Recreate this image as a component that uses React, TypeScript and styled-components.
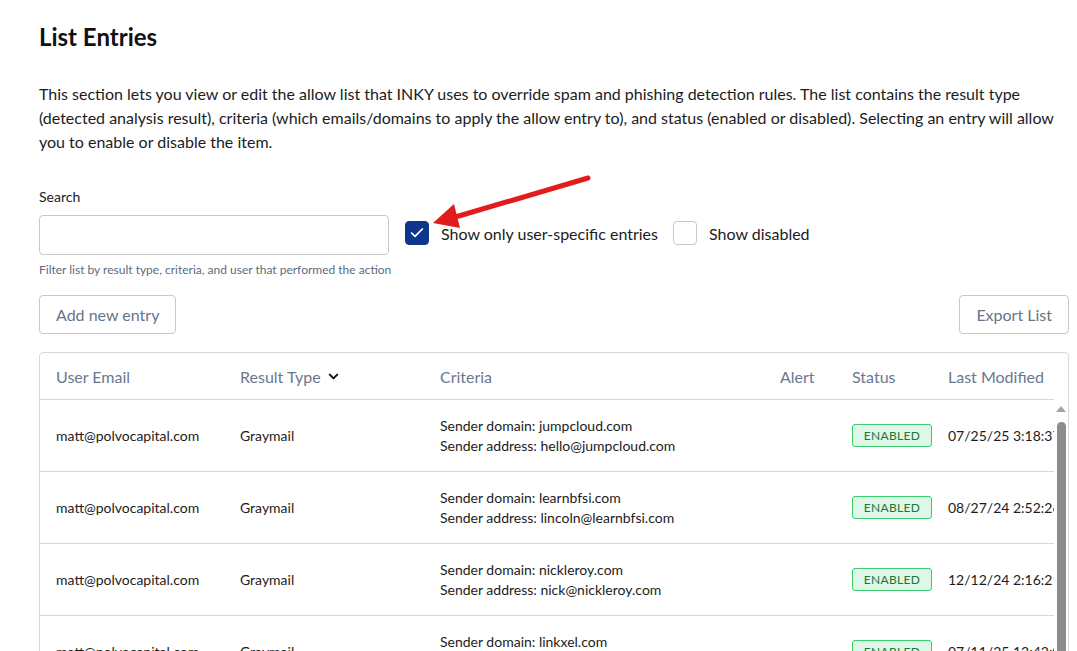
import styled, { createGlobalStyle } from "styled-components";
import { Check, ChevronDown } from "lucide-react";

const GlobalStyle = createGlobalStyle`
  html, body {
    margin: 0;
    padding: 0;
    overflow: hidden;
    background: #fff;
  }
  body {
    font-family: Lato, "Open Sans", sans-serif;
    color: #1c1c1c;
  }
  * { box-sizing: border-box; }
`;

interface Entry {
  email: string;
  resultType: string;
  domain: string;
  address: string;
  modified: string;
}

const entries: Entry[] = [
  { email: "matt@polvocapital.com", resultType: "Graymail", domain: "jumpcloud.com", address: "hello@jumpcloud.com", modified: "07/25/25 3:18:37 PM" },
  { email: "matt@polvocapital.com", resultType: "Graymail", domain: "learnbfsi.com", address: "lincoln@learnbfsi.com", modified: "08/27/24 2:52:26 PM" },
  { email: "matt@polvocapital.com", resultType: "Graymail", domain: "nickleroy.com", address: "nick@nickleroy.com", modified: "12/12/24 2:16:21 PM" },
  { email: "matt@polvocapital.com", resultType: "Graymail", domain: "linkxel.com", address: "info@linkxel.com", modified: "07/11/25 12:42:09 PM" },
];

export default function App() {
  return (
    <>
      <GlobalStyle />
      <Page>
        <Title>List Entries</Title>
        <Intro>
          This section lets you view or edit the allow list that INKY uses to override spam and phishing detection rules. The list contains the result type (detected analysis result), criteria (which emails/domains to apply the allow entry to), and status (enabled or disabled). Selecting an entry will allow you to enable or disable the item.
        </Intro>

        <FieldLabel htmlFor="search">Search</FieldLabel>
        <FilterRow>
          <SearchInput id="search" type="text" />
          <CheckOption>
            <CheckBox $checked>
              <Check size={16} strokeWidth={2.6} color="#fff" />
            </CheckBox>
            Show only user-specific entries
          </CheckOption>
          <CheckOption>
            <CheckBox />
            Show disabled
          </CheckOption>
        </FilterRow>
        <Helper>Filter list by result type, criteria, and user that performed the action</Helper>

        <ButtonBar>
          <OutlineButton>Add new entry</OutlineButton>
          <OutlineButton>Export List</OutlineButton>
        </ButtonBar>

        <Card>
          <TableArea>
            <HeadRow>
              <HeadCell>User Email</HeadCell>
              <HeadCell>
                Result Type
                <ChevronDown size={15} strokeWidth={3.2} color="#111" />
              </HeadCell>
              <HeadCell>Criteria</HeadCell>
              <HeadCell>Alert</HeadCell>
              <HeadCell>Status</HeadCell>
              <HeadCell>Last Modified</HeadCell>
            </HeadRow>
            {entries.map((e, i) => (
              <BodyRow key={i}>
                <Cell>{e.email}</Cell>
                <Cell>{e.resultType}</Cell>
                <Cell>
                  <Criteria>
                    <span>Sender domain: {e.domain}</span>
                    <span>Sender address: {e.address}</span>
                  </Criteria>
                </Cell>
                <Cell />
                <Cell>
                  <Badge>Enabled</Badge>
                </Cell>
                <Cell>{e.modified}</Cell>
              </BodyRow>
            ))}
          </TableArea>
          <ScrollRail>
            <RailArrow />
            <RailThumb />
          </ScrollRail>
        </Card>

        <Annotation width="1077" height="651" viewBox="0 0 1077 651">
          <line x1="588" y1="178" x2="452" y2="218" stroke="#e21c1c" strokeWidth="5" strokeLinecap="round" />
          <polygon points="433,223 454,204 460,228" fill="#e21c1c" />
        </Annotation>
      </Page>
    </>
  );
}

const Page = styled.div`
  position: relative;
  padding: 22px 8px 0 39px;
`;

const Title = styled.h1`
  margin: 0;
  font-size: 24px;
  line-height: 29px;
  font-weight: 700;
  color: #111;
`;

const Intro = styled.p`
  margin: 31px 0 0;
  font-size: 16px;
  line-height: 24px;
  color: #1c1c1c;
`;

const FieldLabel = styled.label`
  display: block;
  margin-top: 33px;
  font-size: 14px;
  line-height: 20px;
  color: #1c1c1c;
`;

const FilterRow = styled.div`
  display: flex;
  align-items: center;
  margin-top: 8px;
`;

const SearchInput = styled.input`
  width: 350px;
  height: 40px;
  border: 1px solid #c6c8cc;
  border-radius: 4px;
  padding: 0 12px;
  font: inherit;
  outline: none;
  margin-right: 16px;
`;

const CheckOption = styled.label`
  display: flex;
  align-items: center;
  gap: 12px;
  font-size: 16px;
  color: #1c1c1c;
  margin-right: 15px;
  margin-top: -4px;
`;

const CheckBox = styled.span<{ $checked?: boolean }>`
  width: 24px;
  height: 24px;
  border-radius: 4px;
  display: flex;
  align-items: center;
  justify-content: center;
  background: ${(p) => (p.$checked ? "#0f368d" : "#fff")};
  border: 1px solid ${(p) => (p.$checked ? "#0f368d" : "#c6c8cc")};
`;

const Helper = styled.p`
  margin: 7px 0 0;
  font-size: 12px;
  line-height: 16px;
  color: #5d6b7e;
`;

const ButtonBar = styled.div`
  display: flex;
  justify-content: space-between;
  margin-top: 17px;
`;

const OutlineButton = styled.button`
  height: 39px;
  padding: 0 16px;
  border: 1px solid #c6c8cc;
  border-radius: 4px;
  background: #fff;
  font-family: Lato, sans-serif;
  font-size: 16px;
  color: #66758a;
`;

const Card = styled.div`
  display: flex;
  margin-top: 18px;
  border: 1px solid #d3d9e1;
  border-radius: 4px;
  height: 320px;
  overflow: hidden;
`;

const TableArea = styled.div`
  flex: 1;
  min-width: 0;
  overflow: hidden;
`;

const columns = "184px 200px 340px 72px 96px 160px";

const HeadRow = styled.div`
  display: grid;
  grid-template-columns: ${columns};
  height: 47px;
  align-items: center;
  padding-left: 16px;
  border-bottom: 1px solid #d3d9e1;
`;

const HeadCell = styled.div`
  display: flex;
  align-items: center;
  gap: 5px;
  font-size: 16px;
  color: #6a788e;
  white-space: nowrap;
`;

const BodyRow = styled.div`
  display: grid;
  grid-template-columns: ${columns};
  height: 72px;
  align-items: center;
  padding-left: 16px;
  border-bottom: 1px solid #d3d9e1;
`;

const Cell = styled.div`
  font-size: 14px;
  line-height: 20px;
  color: #1c1c1c;
  white-space: nowrap;
`;

const Criteria = styled.div`
  display: flex;
  flex-direction: column;
`;

const Badge = styled.span`
  display: inline-block;
  width: 80px;
  height: 23px;
  line-height: 21px;
  text-align: center;
  font-size: 12px;
  letter-spacing: 0.3px;
  text-transform: uppercase;
  color: #23743f;
  background: #ddf8e6;
  border: 1px solid #3ccb6c;
  border-radius: 3px;
`;

const ScrollRail = styled.div`
  width: 14px;
  padding-top: 53px;
  display: flex;
  flex-direction: column;
  align-items: center;
`;

const RailArrow = styled.div`
  width: 0;
  height: 0;
  border-left: 5px solid transparent;
  border-right: 5px solid transparent;
  border-bottom: 6px solid #a3a3a3;
`;

const RailThumb = styled.div`
  margin-top: 10px;
  width: 9px;
  flex: 1;
  background: #8c8c8c;
  border-radius: 5px 5px 0 0;
`;

const Annotation = styled.svg`
  position: absolute;
  left: 0;
  top: 0;
  pointer-events: none;
`;
